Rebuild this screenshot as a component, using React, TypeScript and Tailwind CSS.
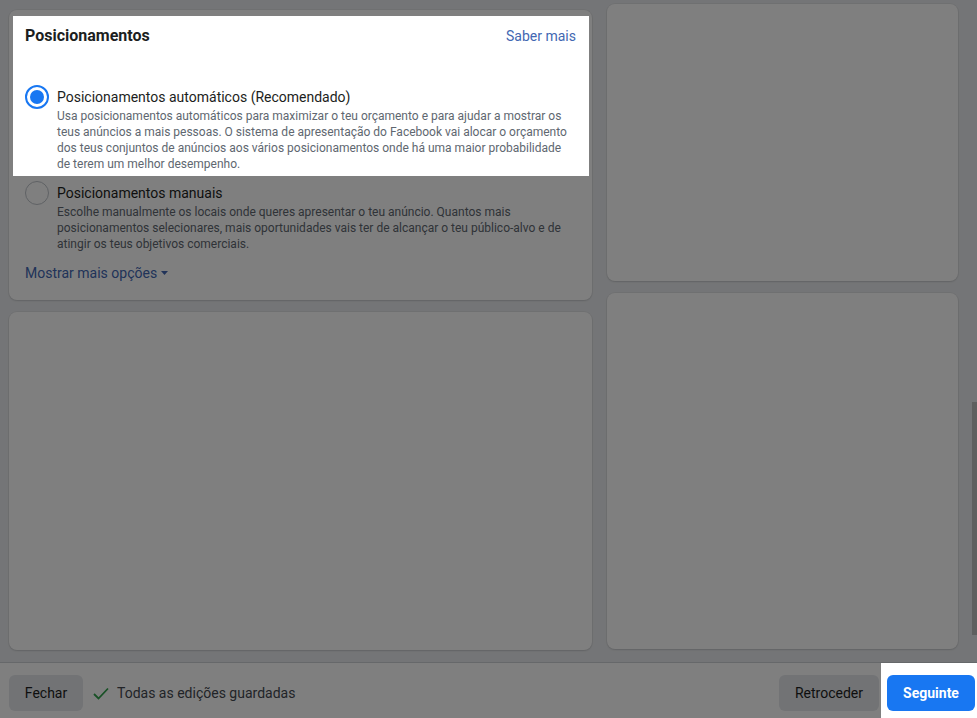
const card = "rounded-lg bg-white shadow-[0_0_0_1px_rgba(0,0,0,0.04),0_1px_2px_rgba(0,0,0,0.12)]";

function Radio({ checked }: { checked?: boolean }) {
  if (checked) {
    return (
      <div className="flex h-6 w-6 shrink-0 items-center justify-center rounded-full border-2 border-[#1877f2] bg-white">
        <div className="h-[14px] w-[14px] rounded-full bg-[#1877f2]" />
      </div>
    );
  }
  return <div className="h-6 w-6 shrink-0 rounded-full border border-[#bec3c9] bg-white" />;
}

function Option({
  checked,
  title,
  lines,
}: {
  checked?: boolean;
  title: string;
  lines: string[];
}) {
  return (
    <div className="flex gap-2">
      <Radio checked={checked} />
      <div className="mt-[2px]">
        <p className="text-[14px] leading-5 text-[#1c1e21]">{title}</p>
        <p className="mt-px whitespace-nowrap text-[12px] leading-4 text-[#606770]">
          {lines.map((l, i) => (
            <span key={i}>
              {l}
              {i < lines.length - 1 && <br />}
            </span>
          ))}
        </p>
      </div>
    </div>
  );
}

export default function App() {
  return (
    <div className="relative flex h-[718px] w-full flex-col overflow-hidden bg-[#e9ebee] font-[Roboto,sans-serif]">
      {/* dim layer of the tour, the spotlit parts sit above it */}
      <div className="fixed inset-0 z-40 bg-black/50" />

      <div className="flex h-[662px] shrink-0">
        {/* left column */}
        <div className="ml-[9px] flex w-[583px] flex-col gap-3 pt-[10px]">
          <div className={`${card} h-[290px] pl-1 pr-[3px] pt-[6px]`}>
            <div className="relative z-50 h-[160px] bg-white pl-3 pr-[13px] pt-[10px]">
              <div className="flex items-center justify-between">
                <h2 className="text-[16px] font-bold leading-5 text-[#1c1e21]">Posicionamentos</h2>
                <a className="text-[14px] leading-5 text-[#4267b2]">Saber mais</a>
              </div>
              <div className="mt-[39px]">
                <Option
                  checked
                  title="Posicionamentos automáticos (Recomendado)"
                  lines={[
                    "Usa posicionamentos automáticos para maximizar o teu orçamento e para ajudar a mostrar os",
                    "teus anúncios a mais pessoas. O sistema de apresentação do Facebook vai alocar o orçamento",
                    "dos teus conjuntos de anúncios aos vários posicionamentos onde há uma maior probabilidade",
                    "de terem um melhor desempenho.",
                  ]}
                />
              </div>
            </div>
            <div className="mt-[5px] px-3">
              <Option
                title="Posicionamentos manuais"
                lines={[
                  "Escolhe manualmente os locais onde queres apresentar o teu anúncio. Quantos mais",
                  "posicionamentos selecionares, mais oportunidades vais ter de alcançar o teu público-alvo e de",
                  "atingir os teus objetivos comerciais.",
                ]}
              />
              <button className="mt-[11px] flex items-center gap-1 text-[14px] leading-5 text-[#4267b2]">
                Mostrar mais opções
                <svg width="7" height="4" viewBox="0 0 7 4">
                  <path d="M0 0h7L3.5 4z" fill="#4267b2" />
                </svg>
              </button>
            </div>
          </div>
          <div className={`${card} h-[338px]`} />
        </div>

        {/* right column */}
        <div className="ml-[15px] flex w-[351px] flex-col gap-3 pt-1">
          <div className={`${card} h-[277px]`} />
          <div className={`${card} h-[356px]`} />
        </div>

        {/* scrollbar */}
        <div className="ml-auto flex w-[5px] flex-col">
          <div className="mt-[402px] h-[233px] bg-[#bebebe]" />
        </div>
      </div>

      {/* footer */}
      <div className="flex h-[56px] shrink-0 border-t border-[#ccd0d5] bg-white">
        <div className="flex items-start gap-[10px] pl-[9px] pt-3">
          <button className="h-9 w-[74px] rounded-md bg-[#e4e6eb] text-[14px] text-[#1c1e21]">Fechar</button>
          <div className="flex h-9 items-center gap-2">
            <svg width="16" height="13" viewBox="0 0 16 13">
              <path d="M1 7l4.5 4.5L15 1.5" fill="none" stroke="#31a24c" strokeWidth="1.8" />
            </svg>
            <span className="text-[14px] text-[#444950]">Todas as edições guardadas</span>
          </div>
        </div>
        <div className="ml-auto flex items-start gap-[2px]">
          <button className="mt-3 h-9 w-[100px] rounded-md bg-[#e4e6eb] text-[14px] text-[#1c1e21]">
            Retroceder
          </button>
          <div className="relative z-50 h-full bg-white pl-[6px] pr-[2px] pt-3">
            <button className="h-9 w-[88px] rounded-md bg-[#1877f2] text-[14px] font-bold text-white">
              Seguinte
            </button>
          </div>
        </div>
      </div>
    </div>
  );
}
